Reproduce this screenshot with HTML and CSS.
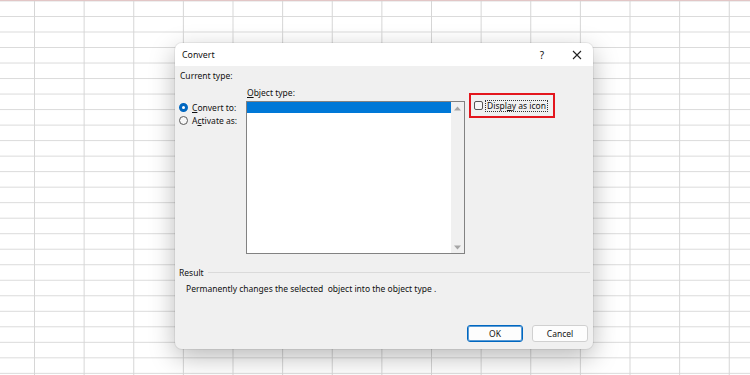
FILE: index.html
```html
<!DOCTYPE html>
<html lang="en">
<head>
    <meta charset="UTF-8">
    <meta name="viewport" content="width=device-width, initial-scale=1.0">
    <title>Convert</title>
    <link rel="stylesheet" href="styles.css">
</head>
<body>
    <div class="dialog">
        <div class="titlebar">
            <div class="title">Convert</div>
            <div class="help">?</div>
            <div class="close">
                <svg width="10" height="10" viewBox="0 0 10 10">
                    <path d="M1 1 L9 9 M9 1 L1 9" stroke="#222" stroke-width="1.1" fill="none"/>
                </svg>
            </div>
        </div>

        <div class="content">
            <div class="label">Current type:</div>

            <div class="main-row">
                <div class="radio-col">
                    <div class="radio-row">
                        <span class="radio checked"></span>
                        <span><u>C</u>onvert to:</span>
                    </div>
                    <div class="radio-row">
                        <span class="radio"></span>
                        <span>A<u>c</u>tivate as:</span>
                    </div>
                </div>

                <div class="list-col">
                    <div class="list-label"><u>O</u>bject type:</div>
                    <div class="listbox">
                        <div class="list-items">
                            <div class="list-item selected"></div>
                        </div>
                        <div class="scrollbar">
                            <svg width="7" height="5" viewBox="0 0 7 5"><path d="M0 4.5 L3.5 0.5 L7 4.5 Z" fill="#a6a6a6"/></svg>
                            <svg width="7" height="5" viewBox="0 0 7 5"><path d="M0 0.5 L3.5 4.5 L7 0.5 Z" fill="#a6a6a6"/></svg>
                        </div>
                    </div>
                </div>

                <div class="highlight">
                    <span class="checkbox"></span>
                    <span class="check-label">Displ<u>a</u>y as icon</span>
                </div>
            </div>

            <div class="result-head">
                <span>Result</span>
                <span class="rule"></span>
            </div>
            <div class="result-text">Permanently changes the selected&nbsp; object into the object type .</div>

            <div class="buttons">
                <button class="btn primary">OK</button>
                <button class="btn">Cancel</button>
            </div>
        </div>
    </div>
</body>
</html>
```

FILE: styles.css
```css
* {
    margin: 0;
    padding: 0;
    box-sizing: border-box;
}

html {
    background: #fff;
}

body {
    font-family: 'Noto Sans', sans-serif;
    font-size: 8.5px;
    color: #111;
    width: 750px;
    height: 375px;
    overflow: hidden;
    padding: 43px 0 0 175px;
    border-top: 1px solid #e2c6c6;
    background-color: #fff;
    background-image:
        linear-gradient(to right, #d6d6d6 1px, transparent 1px),
        linear-gradient(to bottom, #dadada 1px, transparent 1px);
    background-size: 49.64px 100%, 100% 15.52px;
    background-position: 34px 0, 0 15px;
}

.dialog {
    width: 418px;
    height: 306px;
    margin-top: -1px;
    background: #f0f0f0;
    border-radius: 7px;
    box-shadow: 0 8px 26px rgba(0, 0, 0, 0.28), 0 0 0 1px rgba(0, 0, 0, 0.06);
    display: flex;
    flex-direction: column;
    overflow: hidden;
}

.titlebar {
    height: 23px;
    background: #fff;
    display: flex;
    align-items: center;
    padding-left: 7px;
}

.title {
    flex: 1;
    font-size: 8.8px;
}

.help {
    width: 10px;
    text-align: center;
    font-size: 10px;
}

.close {
    width: 10px;
    height: 10px;
    margin: 0 11px 0 25px;
    display: flex;
}

.content {
    flex: 1;
    display: flex;
    flex-direction: column;
    padding: 4px 3px 7px 4px;
}

.label {
    line-height: 12px;
    padding-left: 1px;
}

.main-row {
    display: flex;
    margin-top: 5px;
}

.radio-col {
    width: 67px;
    padding-top: 14px;
}

.radio-row {
    display: flex;
    align-items: center;
    gap: 4px;
    height: 13px;
}

.radio {
    width: 9px;
    height: 9px;
    border-radius: 50%;
    border: 1px solid #5a5a5a;
    background: #f7f7f7;
}

.radio.checked {
    border: 3px solid #0067c0;
    background: #fff;
}

.list-col {
    width: 219px;
}

.list-label {
    line-height: 12px;
    padding-left: 1px;
    margin-bottom: 2px;
}

.listbox {
    height: 153px;
    border: 1px solid #828282;
    background: #fff;
    display: flex;
}

.list-items {
    flex: 1;
}

.list-item {
    height: 11px;
}

.list-item.selected {
    background: #0078d7;
}

.scrollbar {
    width: 13px;
    background: #f0f0f0;
    display: flex;
    flex-direction: column;
    justify-content: space-between;
    align-items: center;
    padding: 4px 0 3px;
}

.highlight {
    margin: 6px 0 0 4px;
    width: 86px;
    height: 25px;
    border: 2px solid #e3161d;
    display: flex;
    align-items: center;
    padding-left: 3px;
    gap: 2px;
}

.checkbox {
    width: 9px;
    height: 9px;
    border: 1px solid #555;
    border-radius: 2px;
    background: #f7f7f7;
}

.check-label {
    border: 1px dotted #333;
    padding: 0 1px;
    line-height: 10px;
}

.result-head {
    display: flex;
    align-items: center;
    gap: 4px;
    margin-top: 13px;
    line-height: 12px;
}

.rule {
    flex: 1;
    height: 1px;
    background: #dadada;
    margin-top: -2px;
}

.result-text {
    padding-left: 7px;
    margin-top: 4px;
    line-height: 12px;
}

.buttons {
    margin-top: auto;
    display: flex;
    justify-content: flex-end;
    gap: 9px;
    padding-right: 2px;
}

.btn {
    width: 56px;
    height: 17px;
    font-family: 'Noto Sans', sans-serif;
    font-size: 8.5px;
    color: #111;
    background: #fdfdfd;
    border: 1px solid #d0d0d0;
    border-radius: 3px;
}

.btn.primary {
    border: 1px solid #0067c0;
    box-shadow: inset 0 0 0 1px #5a9bd5;
}
```
